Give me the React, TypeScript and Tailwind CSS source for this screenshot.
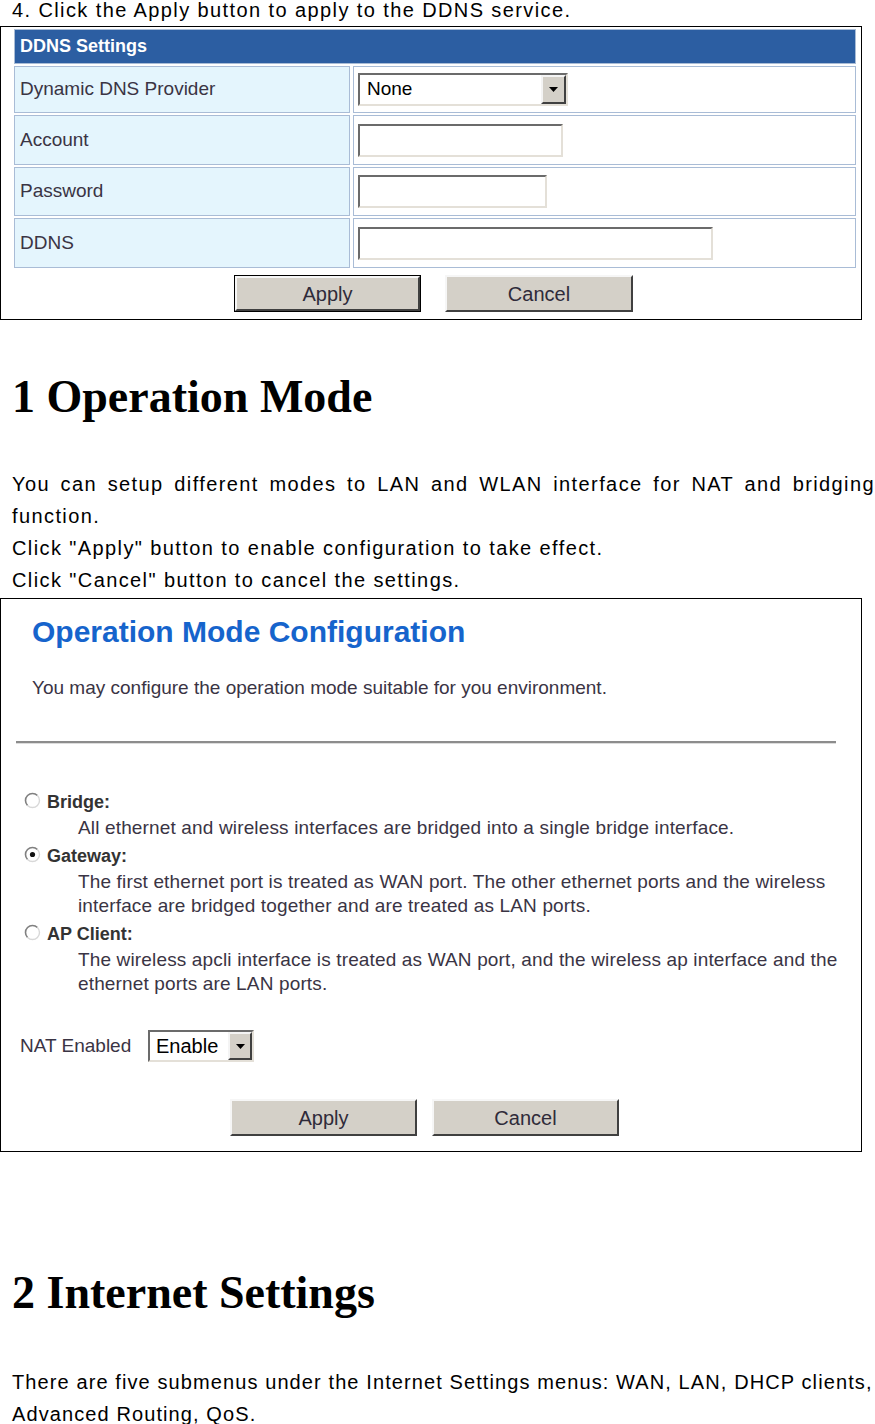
import React from 'react';

const sans = "font-['Liberation_Sans',Arial,sans-serif]";
const serif = "font-['Liberation_Serif','Times_New_Roman',serif]";

function Radio({ checked }: { checked?: boolean }) {
    return (
        <svg width="17" height="17" viewBox="0 0 17 17" className="shrink-0 -mt-[3px]">
            <circle cx="8.5" cy="8.5" r="7" fill="#fff" />
            <path d="M3.55 13.45 A7 7 0 0 1 13.45 3.55" fill="none" stroke="#808080" strokeWidth="1.6" />
            <path d="M13.45 3.55 A7 7 0 0 1 3.55 13.45" fill="none" stroke="#d8d8d8" strokeWidth="1.4" />
            {checked && <circle cx="8.5" cy="8.5" r="2.6" fill="#111" />}
        </svg>
    );
}

function ArrowBox({ className }: { className: string }) {
    return (
        <div className={`${className} bg-[#d4d0c8] border-2 border-t-[#f4f4f4] border-l-[#f4f4f4] border-r-[#404040] border-b-[#404040] flex items-center justify-center`}>
            <svg width="9" height="5" viewBox="0 0 9 5">
                <path d="M0 0 H9 L4.5 5 Z" fill="#000" />
            </svg>
        </div>
    );
}

function Btn({ label, w, focus }: { label: string; w: string; focus?: boolean }) {
    const inner = (
        <div className={`${focus ? 'w-full h-full' : w + ' h-[37px]'} bg-[#d4d0c8] border-2 border-t-[#f6f6f6] border-l-[#f6f6f6] border-r-[#404040] border-b-[#404040] flex items-center justify-center text-[20px] text-[#2f2b3a] ${sans}`}>
            {label}
        </div>
    );
    if (focus) return <div className={`${w} h-[37px] border border-black`}>{inner}</div>;
    return inner;
}

function Inset({ w, children }: { w: string; children?: React.ReactNode }) {
    return (
        <div className={`${w} h-[33px] bg-white border-2 border-t-[#6b6b6b] border-l-[#6b6b6b] border-r-[#e4e0d8] border-b-[#e4e0d8] flex items-center`}>
            {children}
        </div>
    );
}

const rows: { label: string; h: string; field: React.ReactNode }[] = [
    {
        label: 'Dynamic DNS Provider',
        h: 'h-[47px]',
        field: (
            <Inset w="w-[210px]">
                <span className="flex-1 pl-[7px] text-[19px] text-black">None</span>
                <ArrowBox className="w-[25px] h-[29px]" />
            </Inset>
        ),
    },
    { label: 'Account', h: 'h-[50px]', field: <Inset w="w-[205px]" /> },
    { label: 'Password', h: 'h-[49px]', field: <Inset w="w-[189px]" /> },
    { label: 'DDNS', h: 'h-[50px]', field: <Inset w="w-[355px]" /> },
];

const modes = [
    { label: 'Bridge:', desc: ['All ethernet and wireless interfaces are bridged into a single bridge interface.'] },
    {
        label: 'Gateway:',
        checked: true,
        desc: [
            'The first ethernet port is treated as WAN port. The other ethernet ports and the wireless',
            'interface are bridged together and are treated as LAN ports.',
        ],
    },
    {
        label: 'AP Client:',
        desc: [
            'The wireless apcli interface is treated as WAN port, and the wireless ap interface and the',
            'ethernet ports are LAN ports.',
        ],
    },
];

export default function App() {
    return (
        <div className={`w-[875px] min-h-[1424px] bg-white text-black ${sans}`}>
            <div className="h-[20px] leading-[20px] pl-[12px] text-[20px] tracking-[1.4px]">
                4. Click the Apply button to apply to the DDNS service.
            </div>

            {/* DDNS settings figure */}
            <div className="mt-[6px] w-[862px] h-[294px] border border-black">
                <div className="ml-[13px] mt-[2px] w-[842px] flex flex-col gap-[2px]">
                    <div className="h-[35px] bg-[#2c5ea2] border border-[#a9bcd6] flex items-center pl-[5px] text-[18px] font-bold text-white">
                        DDNS Settings
                    </div>
                    {rows.map((r) => (
                        <div key={r.label} className={`${r.h} flex gap-[3px]`}>
                            <div className="w-[336px] bg-[#e4f5fd] border border-[#a9bcd6] flex items-center pl-[5px] text-[19px] text-[#3a3444]">
                                {r.label}
                            </div>
                            <div className="flex-1 bg-white border border-[#a9bcd6] flex items-center pl-[4px]">
                                {r.field}
                            </div>
                        </div>
                    ))}
                </div>
                <div className="mt-[7px] pl-[233px] flex gap-[24px]">
                    <Btn label="Apply" w="w-[187px]" focus />
                    <Btn label="Cancel" w="w-[188px]" />
                </div>
            </div>

            <h1 className={`mt-[54px] pl-[12px] text-[46px] leading-[46px] font-bold ${serif}`}>1 Operation Mode</h1>

            <div className="mt-[48px] pl-[12px] text-[20px] leading-[32px] tracking-[1.4px]">
                <p className="text-justify">
                    You can setup different modes to LAN and WLAN interface for NAT and bridging function.
                </p>
                <p>Click "Apply" button to enable configuration to take effect.</p>
                <p>Click "Cancel" button to cancel the settings.</p>
            </div>

            {/* Operation mode figure */}
            <div className="mt-[2px] w-[862px] h-[554px] border border-black">
                <div className="mt-[15px] pl-[31px] text-[30px] leading-[36px] font-bold text-[#1664cc]">
                    Operation Mode Configuration
                </div>
                <div className="mt-[26px] pl-[31px] text-[19px] leading-[24px] text-[#3a3444]">
                    You may configure the operation mode suitable for you environment.
                </div>
                <div className="mt-[41px] ml-[15px] w-[820px] h-[3px] border-t-2 border-t-[#8c8c8c] border-b border-b-[#dcdcdc]" />

                <div className="mt-[46px] flex flex-col gap-[4px]">
                    {modes.map((m) => (
                        <div key={m.label}>
                            <div className="pl-[23px] h-[24px] flex items-center gap-[6px]">
                                <Radio checked={m.checked} />
                                <span className="text-[18px] leading-[24px] font-bold text-[#333]">{m.label}</span>
                            </div>
                            <div className="mt-[2px] pl-[77px] text-[19px] leading-[24px] tracking-[0.15px] text-[#3a3444]">
                                {m.desc.map((d) => (
                                    <div key={d}>{d}</div>
                                ))}
                            </div>
                        </div>
                    ))}
                </div>

                <div className="mt-[34px] pl-[19px] flex items-center">
                    <span className="w-[128px] text-[19px] text-[#3a3444]">NAT Enabled</span>
                    <div className="w-[106px] h-[32px] bg-white border-2 border-t-[#6b6b6b] border-l-[#6b6b6b] border-r-[#e4e0d8] border-b-[#e4e0d8] flex items-center">
                        <span className="flex-1 pl-[6px] text-[20px] text-black">Enable</span>
                        <ArrowBox className="w-[24px] h-[28px]" />
                    </div>
                </div>

                <div className="mt-[37px] pl-[229px] flex gap-[15px]">
                    <Btn label="Apply" w="w-[187px]" />
                    <Btn label="Cancel" w="w-[187px]" />
                </div>
            </div>

            <h2 className={`mt-[118px] pl-[12px] text-[46px] leading-[46px] font-bold ${serif}`}>2 Internet Settings</h2>

            <div className="mt-[50px] pl-[12px] text-[20px] leading-[32px] tracking-[1.1px]">
                <p className="whitespace-nowrap">
                    There are five submenus under the Internet Settings menus: WAN, LAN, DHCP clients,
                </p>
                <p>Advanced Routing, QoS.</p>
            </div>
        </div>
    );
}
